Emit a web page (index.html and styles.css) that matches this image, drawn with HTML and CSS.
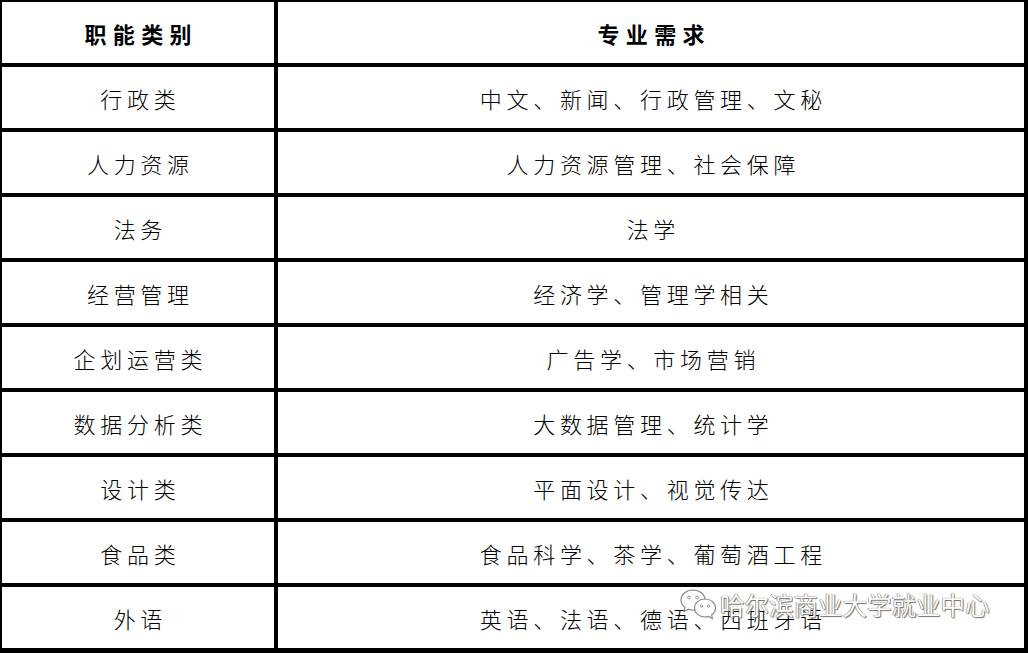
FILE: index.html
```html
<!DOCTYPE html>
<html lang="zh-CN">
<head>
<meta charset="utf-8">
<title>职能类别</title>
<link rel="stylesheet" href="styles.css">
</head>
<body>
<div class="page">
  <div class="table">
    <div class="cell head">职能类别</div><div class="cell head">专业需求</div>
    <div class="cell">行政类</div><div class="cell">中文、新闻、行政管理、文秘</div>
    <div class="cell">人力资源</div><div class="cell">人力资源管理、社会保障</div>
    <div class="cell">法务</div><div class="cell">法学</div>
    <div class="cell">经营管理</div><div class="cell">经济学、管理学相关</div>
    <div class="cell">企划运营类</div><div class="cell">广告学、市场营销</div>
    <div class="cell">数据分析类</div><div class="cell">大数据管理、统计学</div>
    <div class="cell">设计类</div><div class="cell">平面设计、视觉传达</div>
    <div class="cell">食品类</div><div class="cell">食品科学、茶学、葡萄酒工程</div>
    <div class="cell">外语</div><div class="cell">英语、法语、德语、西班牙语</div>
  </div>
  <div class="watermark">
    <svg class="wx" width="38" height="34" viewBox="0 0 38 34">
      <path d="M13 2 C6 2 1 6.5 1 12 C1 15 2.6 17.6 5 19.4 L4 23.5 L8.6 21.2 C10 21.7 11.5 22 13 22 C20 22 25 17.5 25 12 C25 6.5 20 2 13 2 Z" fill="#fff" stroke="#8a8a8a" stroke-width="1.2"/>
      <circle cx="9" cy="9.5" r="1.4" fill="#fff" stroke="#8a8a8a" stroke-width="0.9"/>
      <circle cx="17" cy="9.5" r="1.4" fill="#fff" stroke="#8a8a8a" stroke-width="0.9"/>
      <path d="M25 11 C19 11 14.5 15 14.5 20 C14.5 25 19 29 25 29 C26.3 29 27.5 28.8 28.6 28.4 L32.5 30.5 L31.6 26.9 C34 25.2 35.5 22.8 35.5 20 C35.5 15 31 11 25 11 Z" fill="#fff" stroke="#8a8a8a" stroke-width="1.2"/>
      <circle cx="21.5" cy="18" r="1.2" fill="#fff" stroke="#8a8a8a" stroke-width="0.9"/>
      <circle cx="28.5" cy="18" r="1.2" fill="#fff" stroke="#8a8a8a" stroke-width="0.9"/>
    </svg>
    <span class="wm-text">哈尔滨商业大学就业中心</span>
  </div>
</div>
</body>
</html>
```

FILE: styles.css
```css
html, body {
  margin: 0;
  padding: 0;
  background: #fff;
}

.page {
  position: relative;
  width: 1028px;
  height: 653px;
  overflow: hidden;
}

.table {
  display: grid;
  grid-template-columns: 272px 746px;
  grid-auto-rows: 61px;
  column-gap: 4px;
  row-gap: 4px;
  background: #000;
  padding: 2px 4px 5px 2px;
}

.cell {
  background: #fff;
  display: flex;
  align-items: center;
  justify-content: center;
  padding-top: 0;
  box-sizing: border-box;
  font-family: "Noto Sans CJK SC", "Noto Sans", sans-serif;
  font-size: 22px;
  font-weight: 300;
  letter-spacing: 4.7px;
  text-indent: 4.7px;
  color: #000;
  line-height: 1;
}

.head {
  font-weight: 700;
  letter-spacing: 6.3px;
  text-indent: 6.3px;
}

.watermark {
  position: absolute;
  left: 680px;
  top: 588px;
  display: flex;
  align-items: center;
  gap: 2px;
}

.wm-text {
  font-family: "Noto Sans CJK SC", "Noto Sans", sans-serif;
  font-size: 24.5px;
  line-height: 1;
  color: #fff;
  text-shadow: 0 0 1px #555, 1px 1px 1px #777, -0.5px -0.5px 0 #999;
}
```
